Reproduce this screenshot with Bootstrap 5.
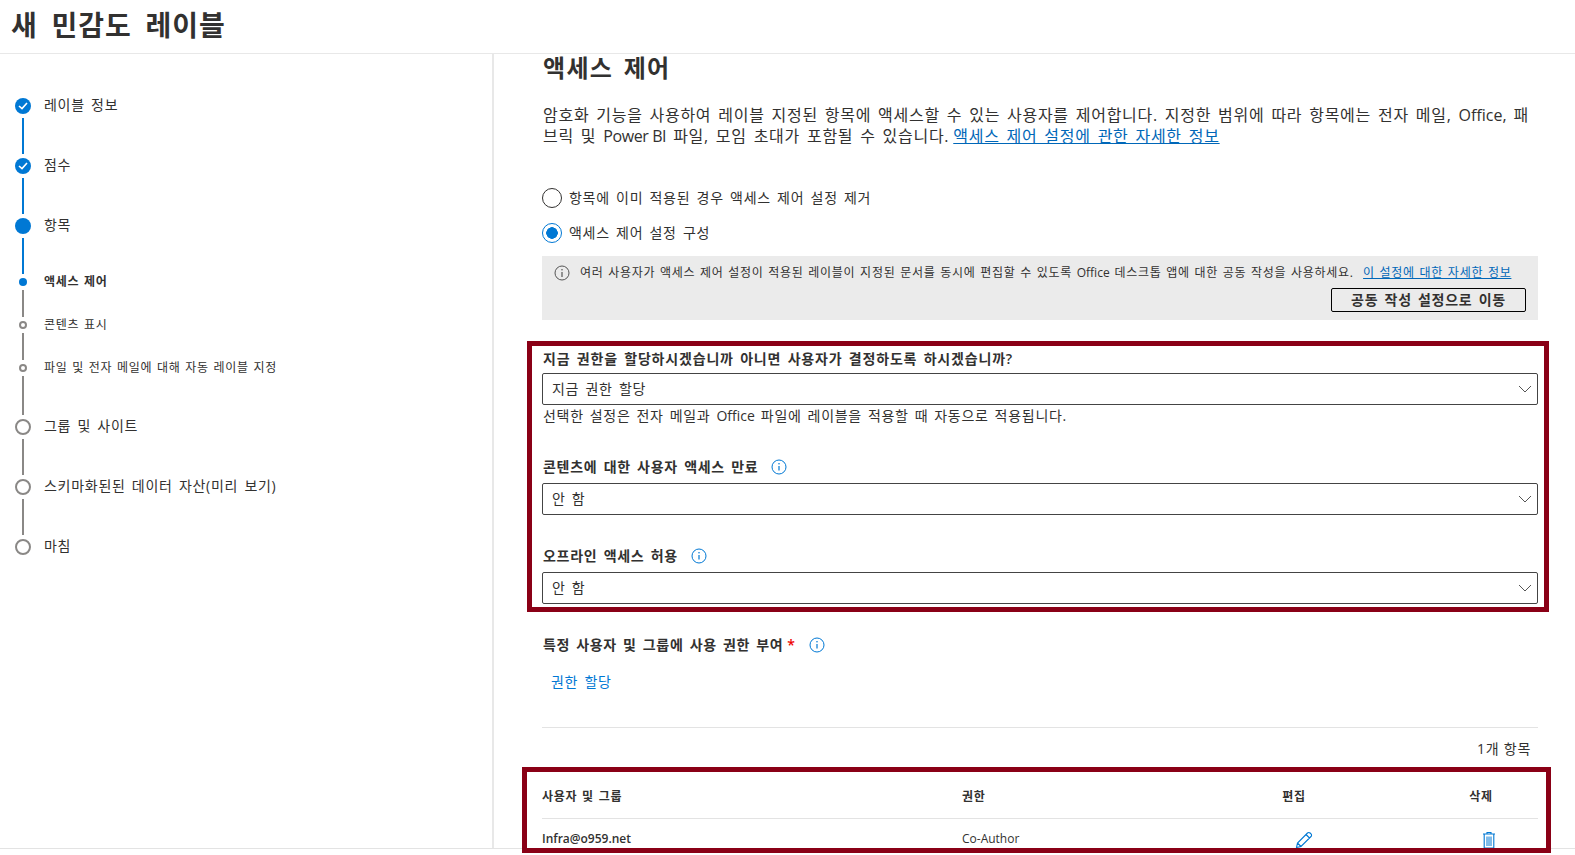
<!DOCTYPE html>
<html lang="ko">
<head>
<meta charset="utf-8">
<title>새 민감도 레이블</title>
<link href="https://cdn.jsdelivr.net/npm/bootstrap@5.3.0/dist/css/bootstrap.min.css" rel="stylesheet">
<style>
html,body{height:855px;overflow:hidden}
body{font-family:"Open Sans","Noto Sans CJK KR",sans-serif;color:#323130;font-size:14px;background:#fff;letter-spacing:.72px;word-spacing:1.9px}
.lat{letter-spacing:0;word-spacing:0}
.lat-tight{letter-spacing:-.4px;word-spacing:0}
.top-bar{height:54px;border-bottom:1px solid #e8e8e8;padding-left:11px}
.top-title{font-size:28px;font-weight:600;line-height:50px;margin:0;letter-spacing:1px;word-spacing:5.5px}
.main-area{height:794px}
.side-pane{width:494px;flex:none;border-right:2px solid #e8e8e8;padding:44px 0 0 15px}
.content-pane{width:996px;margin-left:48px;flex:none}
.step-row{display:flex;align-items:center;gap:13px}
.step-node{width:16px;height:16px;border-radius:50%;background:#0078d4;flex:none;display:flex;align-items:center;justify-content:center}
.step-node.off{background:#fff;border:2px solid #8a8886}
.step-text{line-height:16px;font-size:14px;margin-top:-2px}
.sub-wrap{width:16px;height:8px;flex:none;display:flex;justify-content:center}
.sub-dot{width:8px;height:8px;border-radius:50%;background:#0078d4}
.sub-dot.off{background:#fff;border:2px solid #8a8886}
.sub-text{font-size:12px;line-height:8px;word-spacing:.9px}
.step-line{width:2px;margin:4px 0 4px 7px;background:#0078d4;height:36px}
.step-line.grey{background:#8a8886}
.step-line.sh{height:27px}
.step-line.md{height:39px}
.sec-title{font-size:24px;font-weight:600;line-height:28px;margin:0;padding-left:1px;letter-spacing:1.3px;word-spacing:3px}
.intro{font-size:16px;line-height:21px;margin:23px 0 0;padding-left:1px;word-spacing:2.08px}
.intro a,.note a{color:#0067b8}
.intro a{margin-left:-3px}
.radio-row{display:flex;align-items:center;gap:7px;height:20px;min-height:20px;margin-bottom:0;padding:0}
.radio-row .form-check-input{width:20px;height:20px;margin:0;float:none;border:1px solid #323130;flex:none}
.radio-row .form-check-input:checked{background-color:#fff;border-color:#0078d4;background-image:radial-gradient(circle,#0078d4 0,#0078d4 5.5px,#fff 6px)}
.radio-row .form-check-label{margin-top:-2px}
.note{background:#ebebeb;height:64px;margin-top:13px;padding:8px 12px 0 12px;font-size:12px;word-spacing:.9px}
.note-line{line-height:18px;display:flex;align-items:center;gap:10px;white-space:nowrap}
.note .btn{border:1px solid #000;border-radius:2px;height:24px;width:195px;padding:0;margin-top:6px;font-size:14px;font-weight:600;line-height:20px;color:#323130;background:transparent;letter-spacing:.72px;word-spacing:1.9px}
.mark-box{border:5px solid #8a0016}
.box-a{margin:21px -11px 0 -15px;padding:3px 6px 3px 10px}
.box-b{margin:9px -13px 0 -20px;padding:0 8px 0 15px;height:86px;overflow:hidden;position:relative;z-index:1;background:#fff}
.fld-label{font-weight:600;line-height:20px;font-size:14px;display:flex;align-items:center;gap:13px;padding-left:1px}
.fld-label.wide-l{letter-spacing:.82px}
.fld-label.narrow-l{letter-spacing:.66px}
.form-select.fld{height:32px;border:1px solid #444;border-radius:2px;padding:0 9px;font-size:14px;color:#323130;line-height:30px;letter-spacing:.72px;word-spacing:1.9px;background-size:14px 8px;background-position:right 5px center;background-image:url("data:image/svg+xml,%3Csvg xmlns='http://www.w3.org/2000/svg' viewBox='0 0 14 8'%3E%3Cpath d='M1 1l6 6 6-6' fill='none' stroke='%23555' stroke-width='1'/%3E%3C/svg%3E")}
.help{font-size:14px;line-height:18px;margin-top:2px;padding-left:1px;word-spacing:1.6px}
.req{color:#e00;margin-left:-9px}
.assign{color:#0078d4;padding-left:9px;line-height:20px;margin-top:17px;display:block;text-decoration:none}
.sep{margin:35px 0 0;border:0;border-top:1px solid #e3e3e3;opacity:1}
.count{text-align:right;line-height:18px;margin-top:12px;padding-right:7px;font-size:14px;word-spacing:0}
.perm-table{table-layout:fixed;width:996px;margin:0;font-size:12px;word-spacing:1px}
.perm-table.table>:not(caption)>*>*{padding:0;color:#323130;vertical-align:middle;border-bottom:0;background:transparent}
.perm-table.table>thead>tr>th{height:46px;padding-top:4px;font-weight:600;border-bottom:1px solid #e3e3e3}
.perm-table.table>tbody>tr>td{height:40px;padding-top:2px}
.strong-cell{font-weight:600}
.ico-pen{margin-left:20px}
.ico-bin{margin-left:16px}
.footer-line{border-top:1px solid #e3e3e3;height:7px}
.page-col{height:855px}
</style>
</head>
<body>
<div class="d-flex flex-column page-col">
  <header class="top-bar"><h1 class="top-title">새 민감도 레이블</h1></header>
  <div class="d-flex main-area">
    <nav class="side-pane">
      <div class="step-row"><span class="step-node"><svg width="10" height="8" viewBox="0 0 10 8"><path d="M1 4l3 2.6L9 1" fill="none" stroke="#fff" stroke-width="1.6"/></svg></span><span class="step-text">레이블 정보</span></div>
      <div class="step-line"></div>
      <div class="step-row"><span class="step-node"><svg width="10" height="8" viewBox="0 0 10 8"><path d="M1 4l3 2.6L9 1" fill="none" stroke="#fff" stroke-width="1.6"/></svg></span><span class="step-text">점수</span></div>
      <div class="step-line"></div>
      <div class="step-row"><span class="step-node"></span><span class="step-text">항목</span></div>
      <div class="step-line"></div>
      <div class="step-row"><span class="sub-wrap"><span class="sub-dot"></span></span><span class="sub-text fw-semibold">액세스 제어</span></div>
      <div class="step-line grey sh"></div>
      <div class="step-row"><span class="sub-wrap"><span class="sub-dot off"></span></span><span class="sub-text">콘텐츠 표시</span></div>
      <div class="step-line grey sh"></div>
      <div class="step-row"><span class="sub-wrap"><span class="sub-dot off"></span></span><span class="sub-text">파일 및 전자 메일에 대해 자동 레이블 지정</span></div>
      <div class="step-line grey md"></div>
      <div class="step-row"><span class="step-node off"></span><span class="step-text">그룹 및 사이트</span></div>
      <div class="step-line grey"></div>
      <div class="step-row"><span class="step-node off"></span><span class="step-text">스키마화된된 데이터 자산(미리 보기)</span></div>
      <div class="step-line grey"></div>
      <div class="step-row"><span class="step-node off"></span><span class="step-text">마침</span></div>
    </nav>
    <main class="content-pane">
      <h2 class="sec-title">액세스 제어</h2>
      <p class="intro">암호화 기능을 사용하여 레이블 지정된 항목에 액세스할 수 있는 사용자를 제어합니다. 지정한 범위에 따라 항목에는 전자 메일, <span class="lat">Office,</span> 패브릭 및 <span class="lat-tight">Power BI</span> 파일, 모임 초대가 포함될 수 있습니다. <a href="#">액세스 제어 설정에 관한 자세한 정보</a></p>
      <div class="form-check radio-row" style="margin-top:41px"><input class="form-check-input" type="radio" name="acc" id="r1"><label class="form-check-label" for="r1">항목에 이미 적용된 경우 액세스 제어 설정 제거</label></div>
      <div class="form-check radio-row" style="margin-top:15px"><input class="form-check-input" type="radio" name="acc" id="r2" checked><label class="form-check-label" for="r2">액세스 제어 설정 구성</label></div>
      <div class="note">
        <div class="note-line"><svg width="16" height="16" viewBox="0 0 16 16"><circle cx="8" cy="8" r="7" fill="none" stroke="#555" stroke-width="1"/><path d="M8 7v5" stroke="#555" stroke-width="1.2"/><circle cx="8" cy="4.8" r=".8" fill="#555"/></svg><span>여러 사용자가 액세스 제어 설정이 적용된 레이블이 지정된 문서를 동시에 편집할 수 있도록 <span class="lat">Office</span> 데스크톱 앱에 대한 공동 작성을 사용하세요.&nbsp; <a href="#">이 설정에 대한 자세한 정보</a></span></div>
        <div class="text-end"><button type="button" class="btn">공동 작성 설정으로 이동</button></div>
      </div>
      <section class="mark-box box-a">
        <div class="fld-label wide-l">지금 권한을 할당하시겠습니까 아니면 사용자가 결정하도록 하시겠습니까?</div>
        <select class="form-select fld mt-1"><option>지금 권한 할당</option></select>
        <div class="help">선택한 설정은 전자 메일과 <span class="lat">Office</span> 파일에 레이블을 적용할 때 자동으로 적용됩니다.</div>
        <div class="fld-label" style="margin-top:32px">콘텐츠에 대한 사용자 액세스 만료 <svg width="16" height="16" viewBox="0 0 16 16"><circle cx="8" cy="8" r="7" fill="none" stroke="#0078d4"/><path d="M8 7v4.5" stroke="#0078d4" stroke-width="1.2"/><circle cx="8" cy="4.8" r=".8" fill="#0078d4"/></svg></div>
        <select class="form-select fld" style="margin-top:6px"><option>안 함</option></select>
        <div class="fld-label" style="margin-top:31px">오프라인 액세스 허용 <svg width="16" height="16" viewBox="0 0 16 16"><circle cx="8" cy="8" r="7" fill="none" stroke="#0078d4"/><path d="M8 7v4.5" stroke="#0078d4" stroke-width="1.2"/><circle cx="8" cy="4.8" r=".8" fill="#0078d4"/></svg></div>
        <select class="form-select fld" style="margin-top:6px"><option>안 함</option></select>
      </section>
      <div class="fld-label narrow-l" style="margin-top:23px">특정 사용자 및 그룹에 사용 권한 부여 <span class="req">*</span> <svg width="16" height="16" viewBox="0 0 16 16"><circle cx="8" cy="8" r="7" fill="none" stroke="#0078d4"/><path d="M8 7v4.5" stroke="#0078d4" stroke-width="1.2"/><circle cx="8" cy="4.8" r=".8" fill="#0078d4"/></svg></div>
      <a class="assign" href="#">권한 할당</a>
      <hr class="sep">
      <div class="count">1개 항목</div>
      <section class="mark-box box-b">
        <table class="table perm-table">
          <colgroup><col style="width:420px"><col style="width:202px"><col style="width:260px"><col style="width:114px"></colgroup>
          <thead><tr><th>사용자 및 그룹</th><th>권한</th><th class="text-center">편집</th><th class="text-center">삭제</th></tr></thead>
          <tbody><tr>
            <td class="strong-cell"><span class="lat">Infra@o959.net</span></td><td><span class="lat">Co-Author</span></td>
            <td class="text-center"><svg class="ico-pen" width="18" height="18" viewBox="0 0 18 18"><path d="M1.5 16.5l1-4.500L12.500 2a1.800 1.800 0 0 1 2.600 0l.9.9a1.800 1.800 0 0 1 0 2.600L6 15.500zM2.500 12l3.500 3.500M11 3.500l3.500 3.500" fill="none" stroke="#0078d4" stroke-width="1.100"/></svg></td>
            <td class="text-center"><svg class="ico-bin" width="14" height="18" viewBox="0 0 14 18"><path d="M1 3h12M5 3V1.500h4V3M2.200 3v14h9.600V3" fill="none" stroke="#0078d4" stroke-width="1.100"/><path d="M5 5.500v9.500M7 5.500v9.500M9 5.500v9.500" stroke="#0078d4" stroke-width="1"/></svg></td>
          </tr></tbody>
        </table>
      </section>
    </main>
  </div>
  <div class="footer-line"></div>
</div>
<script src="https://cdn.jsdelivr.net/npm/bootstrap@5.3.0/dist/js/bootstrap.bundle.min.js"></script>
</body>
</html>
